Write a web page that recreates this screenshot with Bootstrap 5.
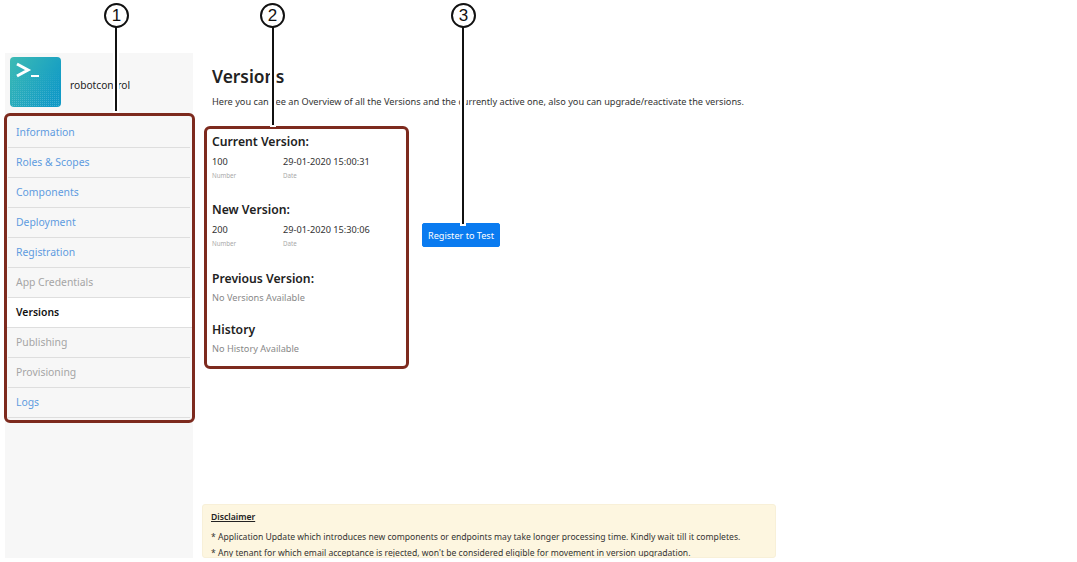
<!DOCTYPE html>
<html lang="en">
<head>
    <meta charset="UTF-8">
    <meta name="viewport" content="width=device-width, initial-scale=1.0">
    <title>Versions</title>
    <link rel="stylesheet" href="https://cdn.jsdelivr.net/npm/bootstrap@5.3.0/dist/css/bootstrap.min.css">
    <style>
        html, body {
            height: 562px;
            overflow: hidden;
        }
        body {
            background-color: #fff;
            font-family: "Noto Sans", "Open Sans", sans-serif;
            color: #333;
            position: relative;
        }
        .app-frame {
            margin: 53px 0 0 5px;
            height: 505px;
            overflow: hidden;
        }
        .side-panel {
            width: 188px;
            background-color: #f7f7f7;
        }
        .app-head {
            height: 65px;
            padding: 4px 0 0 5px;
        }
        .app-name {
            font-size: 10.2px;
            color: #222;
            margin-left: 9px;
            margin-top: -3px;
        }
        .side-link {
            display: block;
            height: 30px;
            line-height: 29px;
            padding: 0 0 0 8px;
            margin: 0 3px;
            font-size: 10.4px;
            color: #5e9be0;
            text-decoration: none;
            border-bottom: 1px solid #dedede;
        }
        .side-link.off { color: #a5a5a5; }
        .side-link.here {
            color: #111;
            font-weight: 600;
            background-color: #fff;
            margin: 0;
            padding-left: 11px;
        }
        .main-panel { width: 0; }
        .page-title {
            font-size: 17.4px;
            font-weight: 600;
            color: #222;
            line-height: 24px;
            margin: 11px 0 0 19px;
        }
        .page-intro {
            font-size: 9.2px;
            line-height: 13px;
            margin: 7px 0 0 19px;
            color: #333;
        }
        .version-box {
            width: 205px;
            height: 243px;
            margin: 18px 0 0 11px;
            padding: 3.5px 0 0 5px;
            border: 3px solid #7d2a1e;
            border-radius: 6px;
        }
        .version-title {
            font-size: 12.2px;
            font-weight: 600;
            line-height: 17px;
            color: #222;
            margin: 0;
        }
        .version-val {
            font-size: 9.2px;
            line-height: 12px;
            margin-top: 6px;
        }
        .version-val > div:first-child { width: 71px; }
        .version-tag {
            font-size: 6.2px;
            line-height: 8px;
            color: #aaa;
            margin-top: 4px;
        }
        .version-tag > div:first-child { width: 71px; }
        .version-none {
            font-size: 9.2px;
            line-height: 12px;
            color: #888;
            margin-top: 5px;
        }
        .gap-a { margin-top: 21px; }
        .gap-b { margin-top: 22px; }
        .gap-c { margin-top: 17px; }
        .btn-register {
            font-size: 9.1px;
            line-height: 12px;
            padding: 6px 0;
            width: 78px;
            height: 24px;
            margin: 115px 0 0 13px;
            background-color: #0a7bf0;
            border-color: #0a7bf0;
            border-radius: 2px;
            white-space: nowrap;
        }
        .note-box {
            position: absolute;
            left: 202px;
            top: 504px;
            width: 574px;
            height: 54px;
            background-color: #fdf6e0;
            border: 1px solid #f8f0d8;
            border-radius: 3px;
            padding: 6px 8px;
            font-size: 8.6px;
            color: #333;
            overflow: hidden;
        }
        .note-head {
            font-weight: 600;
            text-decoration: underline;
            line-height: 13px;
            color: #222;
        }
        .note-line { line-height: 16px; }
        .note-line.first { margin-top: 5px; }
        /* callouts drawn on top of the screenshot */
        .call-num {
            position: absolute;
            top: 3px;
            width: 25px;
            height: 25px;
            border: 2px solid #111;
            border-radius: 50%;
            background-color: #fff;
            font-family: "Liberation Sans", sans-serif;
            font-size: 17px;
            line-height: 21px;
            text-align: center;
            color: #111;
        }
        .call-line {
            position: absolute;
            top: 27px;
            width: 2px;
            background-color: #111;
            box-shadow: 0 0 0 2px #fff;
        }
        .call-frame {
            position: absolute;
            left: 4px;
            top: 113px;
            width: 191px;
            height: 310px;
            border: 3px solid #7d2a1e;
            border-radius: 6px;
        }
    </style>
</head>
<body>
    <div class="app-frame d-flex">
        <div class="side-panel flex-shrink-0">
            <div class="app-head d-flex align-items-start">
                <svg width="51" height="50" viewBox="0 0 51 50" class="flex-shrink-0">
                    <defs>
                        <linearGradient id="logoFill" x1="0" y1="0" x2="1" y2="0.6">
                            <stop offset="0" stop-color="#3dbbb4"/>
                            <stop offset="1" stop-color="#119ac6"/>
                        </linearGradient>
                        <pattern id="logoDots" width="2" height="2" patternUnits="userSpaceOnUse">
                            <rect width="1" height="1" fill="#fff" opacity="0.22"/>
                        </pattern>
                        <linearGradient id="logoFade" x1="0" y1="0" x2="0" y2="1">
                            <stop offset="0" stop-color="#fff" stop-opacity="0"/>
                            <stop offset="1" stop-color="#fff" stop-opacity="1"/>
                        </linearGradient>
                        <mask id="logoMask"><rect x="0" y="12" width="51" height="38" fill="url(#logoFade)"/></mask>
                    </defs>
                    <rect width="51" height="50" rx="4" fill="url(#logoFill)"/>
                    <rect x="1" y="14" width="49" height="35" fill="url(#logoDots)" mask="url(#logoMask)"/>
                    <polyline points="7,7 18,13 7,19" fill="none" stroke="#fff" stroke-width="3"/>
                    <rect x="21" y="18" width="8" height="2" fill="#fff"/>
                </svg>
                <div class="app-name align-self-center">robotcontrol</div>
            </div>
            <nav class="nav flex-column">
                <a class="side-link" href="#">Information</a>
                <a class="side-link" href="#">Roles &amp; Scopes</a>
                <a class="side-link" href="#">Components</a>
                <a class="side-link" href="#">Deployment</a>
                <a class="side-link" href="#">Registration</a>
                <a class="side-link off" href="#">App Credentials</a>
                <a class="side-link here" href="#">Versions</a>
                <a class="side-link off" href="#">Publishing</a>
                <a class="side-link off" href="#">Provisioning</a>
                <a class="side-link" href="#">Logs</a>
            </nav>
        </div>
        <div class="main-panel flex-grow-1">
            <h1 class="page-title">Versions</h1>
            <p class="page-intro">Here you can see an Overview of all the Versions and the currently active one, also you can upgrade/reactivate the versions.</p>
            <div class="d-flex align-items-start">
                <div class="version-box flex-shrink-0">
                    <h2 class="version-title">Current Version:</h2>
                    <div class="version-val d-flex"><div>100</div><div>29-01-2020 15:00:31</div></div>
                    <div class="version-tag d-flex"><div>Number</div><div>Date</div></div>
                    <h2 class="version-title gap-a">New Version:</h2>
                    <div class="version-val d-flex"><div>200</div><div>29-01-2020 15:30:06</div></div>
                    <div class="version-tag d-flex"><div>Number</div><div>Date</div></div>
                    <h2 class="version-title gap-b">Previous Version:</h2>
                    <div class="version-none">No Versions Available</div>
                    <h2 class="version-title gap-c">History</h2>
                    <div class="version-none">No History Available</div>
                </div>
                <button type="button" class="btn btn-primary btn-register">Register to Test</button>
            </div>
        </div>
    </div>

    <div class="note-box">
        <div class="note-head">Disclaimer</div>
        <div class="note-line first">* Application Update which introduces new components or endpoints may take longer processing time. Kindly wait till it completes.</div>
        <div class="note-line">* Any tenant for which email acceptance is rejected, won't be considered eligible for movement in version upgradation.</div>
    </div>

    <div class="call-frame"></div>
    <div class="call-line" style="left:115px;height:84px"></div>
    <div class="call-num" style="left:104px">1</div>
    <div class="call-line" style="left:272px;height:98px"></div>
    <div class="call-num" style="left:260px">2</div>
    <div class="call-line" style="left:462px;height:197px"></div>
    <div class="call-num" style="left:451px">3</div>

    <script src="https://cdn.jsdelivr.net/npm/bootstrap@5.3.0/dist/js/bootstrap.bundle.min.js"></script>
</body>
</html>
